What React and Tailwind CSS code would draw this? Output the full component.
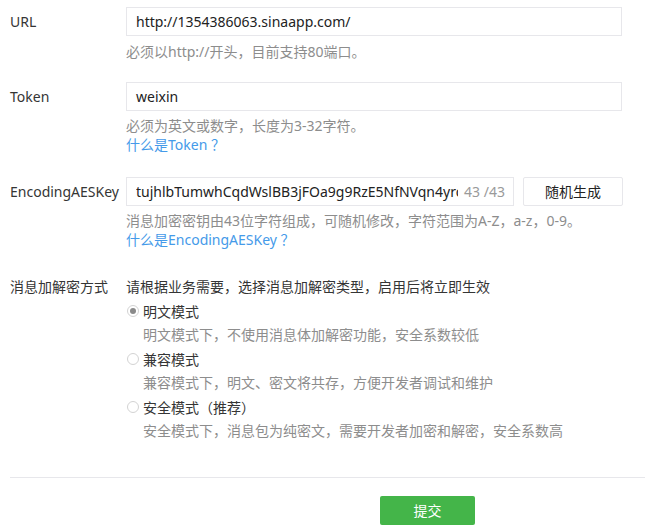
function Row({ label, children, className = '' }) {
  return (
    <div className={`flex ${className}`}>
      <div className="w-[116px] shrink-0 text-[14px] leading-[29px] text-[#353535]">{label}</div>
      <div className="flex-1">{children}</div>
    </div>
  )
}

function Hint({ children }) {
  return <p className="text-[14px] leading-[19px] text-[#8d8d8d]">{children}</p>
}

function Link({ children }) {
  return <a className="block text-[14px] leading-[19px] text-[#459ae9]">{children}</a>
}

function Radio({ checked, label, desc }) {
  return (
    <div>
      <label className="flex h-[24px] items-center">
        <span className="ml-[1px] flex h-[12px] w-[12px] items-center justify-center rounded-full border border-[#d3d3d3] bg-white">
          {checked && <span className="h-[6px] w-[6px] rounded-full bg-[#8a8a8a]" />}
        </span>
        <span className="ml-[4px] text-[14px] text-[#353535]">{label}</span>
      </label>
      <p className="ml-[17px] h-[24px] text-[14px] leading-[24px] text-[#8d8d8d]">{desc}</p>
    </div>
  )
}

export default function App() {
  return (
    <div
      className="w-[645px] h-[531px] bg-white pl-[10px] pt-[7px]"
      style={{ fontFamily: '"Noto Sans", "Noto Sans CJK SC", sans-serif' }}
    >
      <Row label="URL">
        <div className="flex h-[29px] w-[496px] items-center border border-[#e7e7eb] px-[9px] text-[14px] text-[#222]">
          http://1354386063.sinaapp.com/
        </div>
        <div className="mt-[6px]">
          <Hint>必须以http://开头，目前支持80端口。</Hint>
        </div>
      </Row>

      <Row label="Token" className="mt-[21px]">
        <div className="flex h-[29px] w-[496px] items-center border border-[#e7e7eb] px-[9px] text-[14px] text-[#222]">
          weixin
        </div>
        <div className="mt-[5px]">
          <Hint>必须为英文或数字，长度为3-32字符。</Hint>
          <Link>什么是Token ？</Link>
        </div>
      </Row>

      <Row label="EncodingAESKey" className="mt-[23px]">
        <div className="flex items-center gap-[9px]">
          <div className="flex h-[29px] w-[388px] items-center border border-[#e7e7eb] pl-[9px] pr-[8px] text-[14px]">
            <span className="min-w-0 flex-1 overflow-hidden whitespace-nowrap text-[#222]">
              tujhlbTumwhCqdWslBB3jFOa9g9RzE5NfNVqn4yro4Kx
            </span>
            <span className="ml-[6px] shrink-0 text-[#9a9a9a]">43 /43</span>
          </div>
          <button className="h-[29px] w-[100px] rounded-[2px] border border-[#e7e7eb] bg-white text-[14px] text-[#222]">
            随机生成
          </button>
        </div>
        <div className="mt-[5px]">
          <Hint>消息加密密钥由43位字符组成，可随机修改，字符范围为A-Z，a-z，0-9。</Hint>
          <Link>什么是EncodingAESKey ？</Link>
        </div>
      </Row>

      <div className="mt-[26px] flex">
        <div className="w-[116px] shrink-0 text-[14px] leading-[24px] text-[#353535]">消息加解密方式</div>
        <div className="flex-1">
          <p className="h-[24px] text-[14px] leading-[24px] text-[#353535]">
            请根据业务需要，选择消息加解密类型，启用后将立即生效
          </p>
          <Radio checked label="明文模式" desc="明文模式下，不使用消息体加解密功能，安全系数较低" />
          <Radio label="兼容模式" desc="兼容模式下，明文、密文将共存，方便开发者调试和维护" />
          <Radio label="安全模式（推荐）" desc="安全模式下，消息包为纯密文，需要开发者加密和解密，安全系数高" />
        </div>
      </div>

      <div className="mt-[34px] border-t border-[#e7e7eb]" />

      <div className="mt-[18px] pl-[370px]">
        <button className="h-[29px] w-[95px] rounded-[2px] bg-[#44b549] text-[14px] text-white">提交</button>
      </div>
    </div>
  )
}
